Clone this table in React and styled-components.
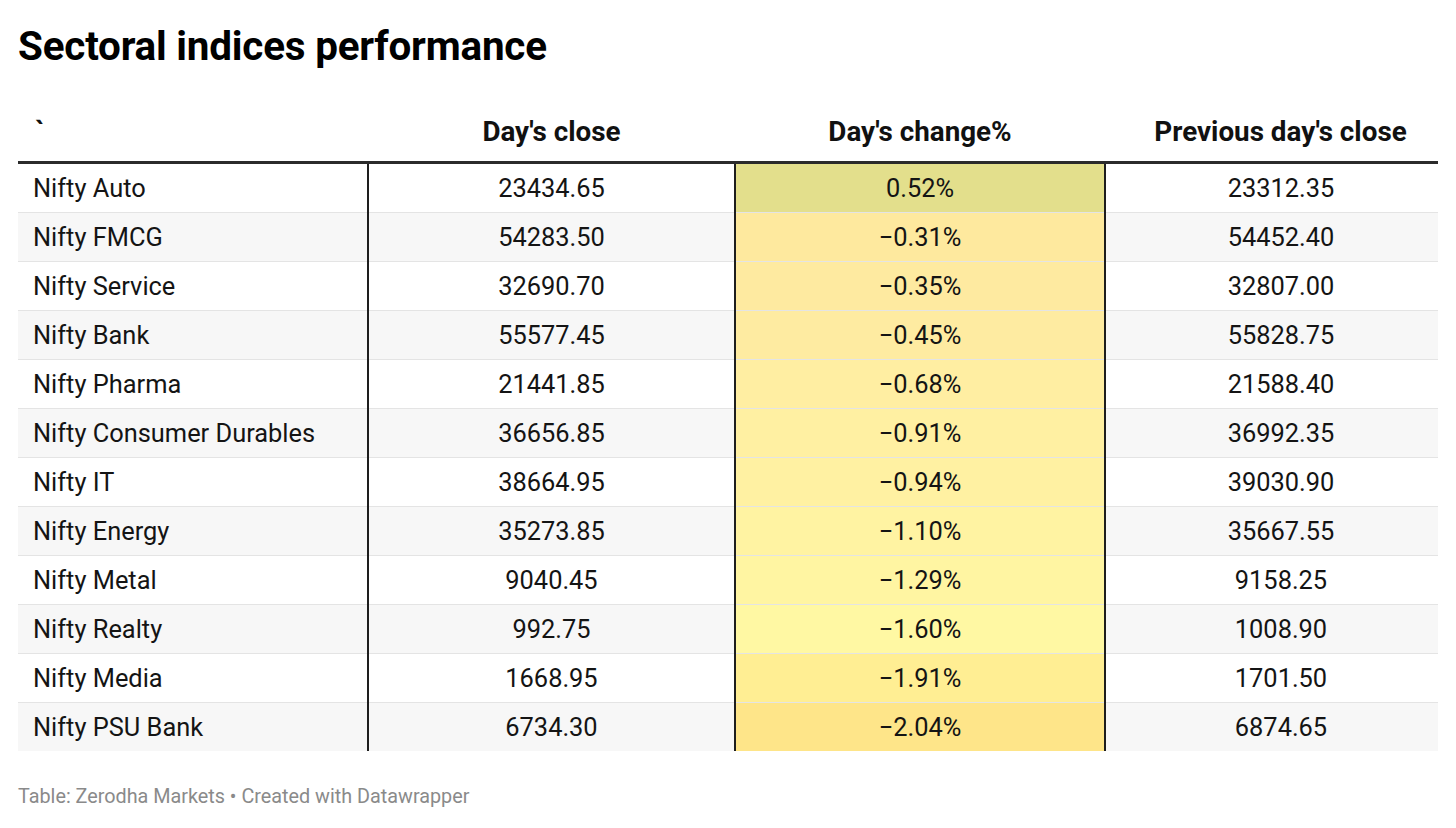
import React from "react";
import styled, { createGlobalStyle } from "styled-components";

const GlobalStyle = createGlobalStyle`
  body {
    margin: 0;
    background: #ffffff;
    font-family: Roboto, "Liberation Sans", sans-serif;
    color: #181818;
  }
`;

const Page = styled.div`
  width: 1456px;
  height: 828px;
  padding: 0 18px;
  box-sizing: border-box;
`;

const Title = styled.h1`
  margin: 0;
  padding-top: 23px;
  font-size: 40.4px;
  font-weight: 700;
  line-height: 48px;
  letter-spacing: -0.2px;
  color: #000;
`;

const Table = styled.table`
  margin-top: 20px;
  width: 1420px;
  border-collapse: collapse;
  table-layout: fixed;
`;

const Th = styled.th`
  height: 55px;
  padding: 0 0 15px ${(p) => p.$padLeft || 0}px;
  font-size: 27.8px;
  font-weight: 700;
  text-align: ${(p) => (p.$left ? "left" : "center")};
  vertical-align: bottom;
  border-bottom: 3px solid #2b2b2b;
  color: #111;
  line-height: 28px;
  white-space: nowrap;
`;

const Tick = styled.span`
  display: inline-block;
  padding-left: 17px;
`;

const Tr = styled.tr`
  background: ${(p) => (p.$odd ? "#f7f7f7" : "#ffffff")};
  &:not(:last-child) td {
    border-bottom: 1px solid #e4e4e4;
  }
`;

const Td = styled.td`
  height: 48px;
  padding: 0 0 0 ${(p) => p.$padLeft || 0}px;
  font-size: 25.4px;
  line-height: 48px;
  text-align: ${(p) => (p.$left ? "left" : "center")};
  border-right: ${(p) => (p.$divider ? "2px solid #1e1e1e" : "none")};
  background: ${(p) => p.$heat || "transparent"};
  color: #141414;
  white-space: nowrap;
`;

const Footer = styled.div`
  margin-top: 34px;
  font-size: 19.8px;
  color: #8a8a8a;
  line-height: 24px;
`;

const rows = [
  ["Nifty Auto", "23434.65", "0.52%", "23312.35", "#e3df8c"],
  ["Nifty FMCG", "54283.50", "\u22120.31%", "54452.40", "#fee99e"],
  ["Nifty Service", "32690.70", "\u22120.35%", "32807.00", "#feeaa0"],
  ["Nifty Bank", "55577.45", "\u22120.45%", "55828.75", "#feeba1"],
  ["Nifty Pharma", "21441.85", "\u22120.68%", "21588.40", "#ffeea2"],
  ["Nifty Consumer Durables", "36656.85", "\u22120.91%", "36992.35", "#fff0a2"],
  ["Nifty IT", "38664.95", "\u22120.94%", "39030.90", "#fff1a2"],
  ["Nifty Energy", "35273.85", "\u22121.10%", "35667.55", "#fff3a2"],
  ["Nifty Metal", "9040.45", "\u22121.29%", "9158.25", "#fff5a2"],
  ["Nifty Realty", "992.75", "\u22121.60%", "1008.90", "#fff8a3"],
  ["Nifty Media", "1668.95", "\u22121.91%", "1701.50", "#ffee93"],
  ["Nifty PSU Bank", "6734.30", "\u22122.04%", "6874.65", "#fee589"],
];

export default function App() {
  return (
    <Page>
      <GlobalStyle />
      <Title>Sectoral indices performance</Title>
      <Table>
        <colgroup>
          <col style={{ width: 350 }} />
          <col style={{ width: 367 }} />
          <col style={{ width: 370 }} />
          <col style={{ width: 333 }} />
        </colgroup>
        <thead>
          <tr>
            <Th $left>
              <Tick>`</Tick>
            </Th>
            <Th>Day's close</Th>
            <Th>Day's change%</Th>
            <Th $padLeft={18}>Previous day's close</Th>
          </tr>
        </thead>
        <tbody>
          {rows.map(([name, close, change, prev, heat], i) => (
            <Tr key={name} $odd={i % 2 === 1}>
              <Td $left $padLeft={15} $divider>
                {name}
              </Td>
              <Td $divider>{close}</Td>
              <Td $divider $heat={heat}>
                {change}
              </Td>
              <Td $padLeft={18}>{prev}</Td>
            </Tr>
          ))}
        </tbody>
      </Table>
      <Footer>Table: Zerodha Markets • Created with Datawrapper</Footer>
    </Page>
  );
}
